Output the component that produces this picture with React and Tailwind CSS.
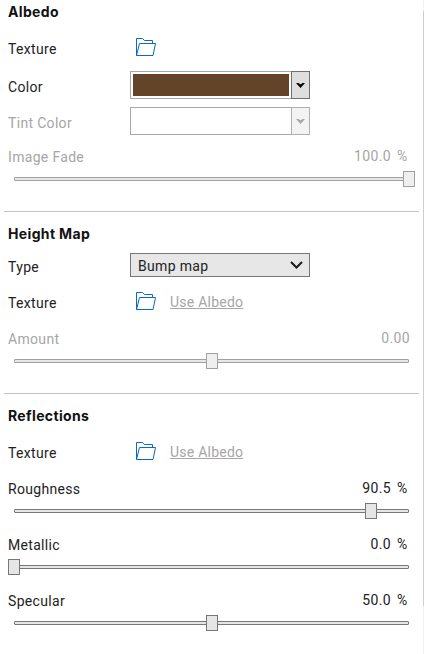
import React from 'react';

function Title({ children }) {
  return (
    <h2 className="h-5 font-[Inter] text-[14px] font-bold leading-5 tracking-[0.35px] text-[#111]">
      {children}
    </h2>
  );
}

function FolderIcon() {
  return (
    <svg className="ml-[5px] h-[18px] w-[22px] shrink-0" viewBox="0 0 22 18" fill="none" stroke="#0b69c0">
      <path d="M1.5 17.5V.5H7.5L9.5 2.5H17.5V5.5" />
      <path d="M1.5 17.5L4.5 5.5H20.5L18 17.5Z" />
    </svg>
  );
}

function TextureRow({ link }) {
  return (
    <div className="flex h-[18px] items-center">
      <span className="relative top-[2px] w-[122px]">Texture</span>
      <FolderIcon />
      {link && (
        <a className="relative top-px ml-[13px] tracking-[0.24px] text-[#a6a6a6] underline decoration-1 underline-offset-1">
          Use Albedo
        </a>
      )}
    </div>
  );
}

function ColorRow({ label, fill, disabled }) {
  return (
    <div className="flex h-7 items-center">
      <span className={`relative top-[2px] w-[122px] shrink-0 ${disabled ? 'text-[#a6a6a6]' : ''}`}>{label}</span>
      <div className="h-7 w-[161px] shrink-0 border border-r-0 border-[#a7a7ac] bg-white p-[2px]">
        <div className={`h-full w-[156px] ${fill}`} />
      </div>
      <div
        className={`flex h-7 w-[19px] shrink-0 items-center justify-center border ${
          disabled ? 'border-[#b0b0b0] bg-[#f3f3f3] text-[#a6a6a6]' : 'border-[#707070] bg-[#dedede] text-black'
        }`}
      >
        <svg className="h-[5px] w-[9px]" viewBox="0 0 9 5" fill="currentColor">
          <path d="M0 0H2.5L4.5 1.5L6.5 0H9L4.5 5Z" />
        </svg>
      </div>
    </div>
  );
}

function Slider({ label, value, unit, percent, disabled }) {
  const line = disabled ? 'border-[#a0a0a0]' : 'border-[#777]';
  return (
    <div className={disabled ? 'text-[#a6a6a6]' : ''}>
      <div className="flex h-5 items-center">
        <span>{label}</span>
        <span className={`relative -top-px ml-auto flex ${unit ? 'mr-[15px]' : 'mr-[13px]'}`}>
          <span className="tracking-[0.35px]">{value}</span>
          {unit && <span className="ml-[6px] w-[11px] tracking-normal">%</span>}
        </span>
      </div>
      <div className="mt-1 grid h-4 w-[407px] items-center">
        <div className={`col-start-1 row-start-1 mx-[6px] h-1 rounded-[1px] border bg-[#e7e7e7] ${line}`} />
        <div className="col-start-1 row-start-1 mr-3">
          <div
            className={`h-4 w-3 border ${line} ${disabled ? 'bg-[#efefef]' : 'bg-[#e6e6e6]'}`}
            style={{ marginLeft: `${percent}%` }}
          />
        </div>
      </div>
    </div>
  );
}

function Divider() {
  return <div className="-ml-1 mt-6 h-px w-[415px] bg-[#c3c3c3]" />;
}

export default function App() {
  return (
    <div className="flex h-[654px] w-[424px] overflow-hidden bg-white font-[Roboto,sans-serif] text-[14px] leading-5 tracking-[0.32px] text-[#222]">
      <main className="w-[423px] shrink-0 pl-2 pt-[2px]">
        <Title>Albedo</Title>
        <div className="mt-4">
          <TextureRow />
        </div>
        <div className="mt-[15px] flex flex-col gap-2">
          <ColorRow label="Color" fill="bg-[#644429]" />
          <ColorRow label="Tint Color" fill="bg-white" disabled />
        </div>
        <div className="mt-3">
          <Slider label="Image Fade" value="100.0" unit percent={100} disabled />
        </div>
        <Divider />
        <div className="mt-3">
          <Title>Height Map</Title>
        </div>
        <div className="mt-[9px] flex h-6 items-center">
          <span className="relative top-[2px] w-[122px]">Type</span>
          <div className="flex h-6 w-[180px] items-center justify-between border border-[#777] bg-[#e7e7e7] pl-[7px] pr-[6px]">
            <span className="relative top-px">Bump map</span>
            <svg className="h-2 w-[13px]" viewBox="0 0 13 8" fill="none" stroke="#1c1c1c" strokeWidth="2">
              <path d="M1 1L6.5 6.5L12 1" />
            </svg>
          </div>
        </div>
        <div className="mt-[15px]">
          <TextureRow link />
        </div>
        <div className="mt-[19px]">
          <Slider label="Amount" value="0.00" percent={50} disabled />
        </div>
        <Divider />
        <div className="mt-3">
          <Title>Reflections</Title>
        </div>
        <div className="mt-4">
          <TextureRow link />
        </div>
        <div className="mt-[19px] flex flex-col gap-4">
          <Slider label="Roughness" value="90.5" unit percent={90.5} />
          <Slider label="Metallic" value="0.0" unit percent={0} />
          <Slider label="Specular" value="50.0" unit percent={50} />
        </div>
      </main>
      <aside className="w-px bg-[#f0f0f0] pt-[11px]">
        <div className="h-[595px] bg-[#cdcdcd]" />
      </aside>
    </div>
  );
}
